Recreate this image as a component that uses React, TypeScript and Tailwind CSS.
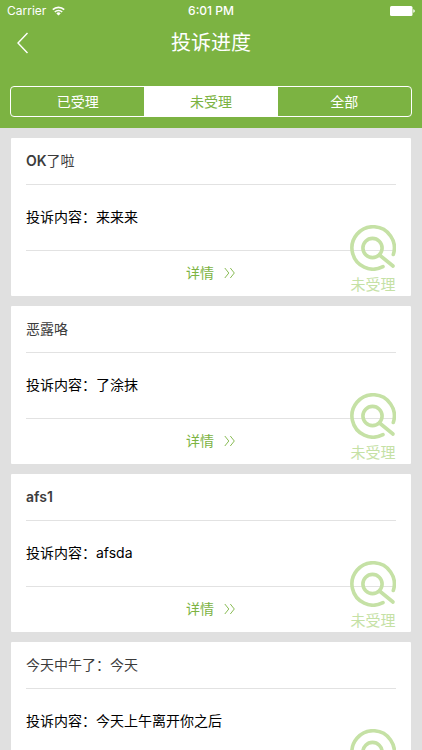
import { useState } from "react";

type Complaint = { id: number; title: string; content: string };

const tabs = ["已受理", "未受理", "全部"];

const complaints: Complaint[] = [
  { id: 1, title: "OK了啦", content: "来来来" },
  { id: 2, title: "恶露咯", content: "了涂抹" },
  { id: 3, title: "afs1", content: "afsda" },
  { id: 4, title: "今天中午了：今天", content: "今天上午离开你之后" },
];

function StatusBar() {
  return (
    <div className="grid h-5 grid-cols-3 items-center px-[7px] pt-[2px] text-xs leading-4">
      <div className="flex items-center gap-[6px]">
        <span>Carrier</span>
        <svg width="13" height="10" viewBox="0 0 13 10" fill="none" stroke="currentColor" strokeWidth="1.6" aria-hidden="true">
          <path d="M.8 3.7a8.2 8.2 0 0 1 11.4 0" />
          <path d="M2.8 6a5.3 5.3 0 0 1 7.4 0" />
          <path d="M6.5 9.6 4.3 7.4a3.2 3.2 0 0 1 4.4 0z" fill="currentColor" stroke="none" />
        </svg>
      </div>
      <span className="text-center font-medium">6:01 PM</span>
      <svg className="justify-self-end" width="25" height="10" viewBox="0 0 25 10" fill="currentColor" aria-hidden="true">
        <rect width="22.500" height="10" rx="1.5" />
        <path d="M23.300 3.2c1 .3 1.500 1 1.500 1.8s-.5 1.500-1.500 1.800z" />
      </svg>
    </div>
  );
}

function CardTitle({ text }: { text: string }) {
  return (
    <h2 className="flex h-[47px] items-center border-b border-[#e2e2e2] text-[#3c3c3c]">
      {text.split(/([A-Za-z0-9]+)/).map((part, i) =>
        i % 2 === 1 ? (
          <b key={i} className="font-semibold">
            {part}
          </b>
        ) : (
          <span key={i}>{part}</span>
        ),
      )}
    </h2>
  );
}

function PendingStamp() {
  return (
    <div className="pointer-events-none absolute right-[15px] bottom-0 flex flex-col items-center text-[#c5e1a5]">
      <svg width="46" height="46" viewBox="0 0 46 46" fill="none" stroke="currentColor" strokeWidth="3.600" strokeLinecap="round" aria-hidden="true">
        <path d="M43.300 29.500A21.200 21.200 0 1 0 33 41.700" />
        <circle cx="22.500" cy="23" r="9.600" />
        <path d="m29.500 30 13.500 11" />
      </svg>
      <span className="mt-[3px] h-[22px] text-[15px] leading-[22px]">未受理</span>
    </div>
  );
}

function ComplaintCard({ item }: { item: Complaint }) {
  return (
    <li className="relative rounded-[1px] bg-white px-[15px] text-sm">
      <CardTitle text={item.title} />
      <p className="flex h-[66px] items-center border-b border-[#e2e2e2] pb-[2px] text-black">
        投诉内容：{item.content}
      </p>
      <div className="flex h-[45px] items-center justify-center pb-[2px]">
        <a href={`#complaint-${item.id}`} className="flex items-center gap-[10px] text-[#7cb342]">
          详情
          <svg width="12" height="12" viewBox="0 0 12 12" fill="none" stroke="currentColor" strokeWidth=".9" aria-hidden="true">
            <path d="m.8 1 4 5-4 5M6.300 1l4 5-4 5" />
          </svg>
        </a>
      </div>
      <PendingStamp />
    </li>
  );
}

export default function App() {
  const [active, setActive] = useState(1);

  return (
    <div className="flex h-screen flex-col bg-[#e0e0e0] font-[Inter,'Noto_Sans_CJK_SC',sans-serif]" lang="zh-CN">
      <header className="shrink-0 bg-[#7cb342] pb-[11px] text-white">
        <StatusBar />
        <div className="grid h-[46px] grid-cols-[44px_1fr_44px] items-center">
          <button type="button" aria-label="返回" className="flex h-11 items-center pl-4">
            <svg width="13" height="22" viewBox="0 0 13 22" fill="none" stroke="currentColor" strokeWidth="1.400" aria-hidden="true">
              <path d="M11.500 1 2 11l9.500 10" />
            </svg>
          </button>
          <h1 className="text-center text-xl">投诉进度</h1>
        </div>
        <div className="mx-[10px] mt-5 grid h-[31px] grid-cols-3 overflow-hidden rounded-[4px] border border-white text-sm">
          {tabs.map((tab, i) => (
            <button
              key={tab}
              type="button"
              aria-pressed={i === active}
              onClick={() => setActive(i)}
              className={i === active ? "bg-white text-[#7cb342]" : "text-white"}
            >
              {tab}
            </button>
          ))}
        </div>
      </header>
      <main className="min-h-0 flex-1 overflow-y-auto [scrollbar-width:none]">
        <ul className="flex flex-col gap-[10px] px-[11px] py-[10px]">
          {complaints.map((item) => (
            <ComplaintCard key={item.id} item={item} />
          ))}
        </ul>
      </main>
    </div>
  );
}
